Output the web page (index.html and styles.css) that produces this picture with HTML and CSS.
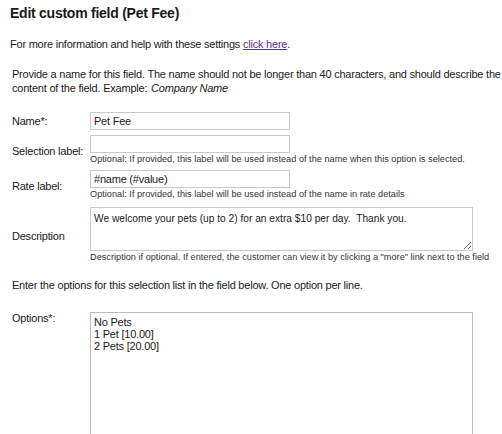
FILE: index.html
```html
<!DOCTYPE html>
<html>
<head>
	<title>Edit custom field</title>
	<link rel="stylesheet" href="styles.css">
</head>
<body>
	<h1 class="title">Edit custom field (Pet Fee)</h1>
	<p class="help">For more information and help with these settings <a href="#">click here</a>.</p>

	<div class="form">
		<p class="intro">Provide a name for this field. The name should not be longer than 40 characters, and should describe the content of the field. Example: <em>Company Name</em></p>

		<div class="row row-name">
			<label class="label">Name*:</label>
			<div class="field"><input type="text" class="input" value="Pet Fee"></div>
		</div>
		<div class="row row-sel">
			<label class="label">Selection label:</label>
			<div class="field">
				<input type="text" class="input" value="">
				<div class="note">Optional: If provided, this label will be used instead of the name when this option is selected.</div>
			</div>
		</div>
		<div class="row">
			<label class="label">Rate label:</label>
			<div class="field">
				<input type="text" class="input" value="#name (#value)">
				<div class="note">Optional: If provided, this label will be used instead of the name in rate details</div>
			</div>
		</div>
		<div class="row row-desc">
			<label class="label">Description</label>
			<div class="field">
				<textarea class="textarea desc">We welcome your pets (up to 2) for an extra $10 per day.  Thank you.</textarea>
				<div class="note">Description if optional. If entered, the customer can view it by clicking a "more" link next to the field</div>
			</div>
		</div>

		<p class="intro options-intro">Enter the options for this selection list in the field below. One option per line.</p>

		<div class="row row-top">
			<label class="label">Options*:</label>
			<div class="field">
				<textarea class="textarea options">No Pets
1 Pet [10.00]
2 Pets [20.00]</textarea>
			</div>
		</div>
	</div>
</body>
</html>
```

FILE: styles.css
```css
body {
	margin: 0;
	padding: 0 0 0 10px;
	font-family: "Liberation Sans", Arial, sans-serif;
	font-size: 11px;
	letter-spacing: -0.22px;
	color: #1a1a1a;
	background: #fff;
}
.title {
	font-size: 14px;
	font-weight: bold;
	letter-spacing: -0.25px;
	margin: 4px 0 0;
	line-height: 18px;
}
.help {
	margin: 15px 0 0;
	line-height: 14px;
}
.help a {
	color: #5b2f86;
}
.form {
	padding-left: 2px;
}
.intro {
	margin: 16px 0 0;
	line-height: 14px;
}
.intro em {
	font-style: italic;
	padding-left: 1px;
}
.row {
	display: grid;
	grid-template-columns: 78px 1fr;
	align-items: center;
	margin-top: 4px;
}
.row-name {
	margin-top: 17px;
}
.row-sel {
	margin-top: 5px;
}
.row-desc {
	margin-top: 6px;
}
.row-top {
	align-items: start;
	margin-top: 20px;
}
.label {
	white-space: nowrap;
}
.input {
	display: block;
	box-sizing: border-box;
	width: 200px;
	height: 18px;
	margin: 0;
	padding: 0 3px;
	border: 1px solid #c9c9c9;
	font: inherit;
	letter-spacing: inherit;
	color: #1a1a1a;
}
.note {
	font-size: 9.2px;
	letter-spacing: 0;
	line-height: 13px;
	color: #333;
}
.textarea {
	display: block;
	box-sizing: border-box;
	width: 383px;
	margin: 0;
	padding: 3px 3px;
	border: 1px solid #c9c9c9;
	font: inherit;
	letter-spacing: inherit;
	line-height: 12px;
	color: #1a1a1a;
}
.desc {
	height: 44px;
	padding-top: 5px;
	font-size: 10.2px;
	letter-spacing: 0;
}
.options {
	height: 140px;
	border-color: #bdbdbd;
	resize: none;
}
.options-intro {
	margin-top: 14px;
}
```
